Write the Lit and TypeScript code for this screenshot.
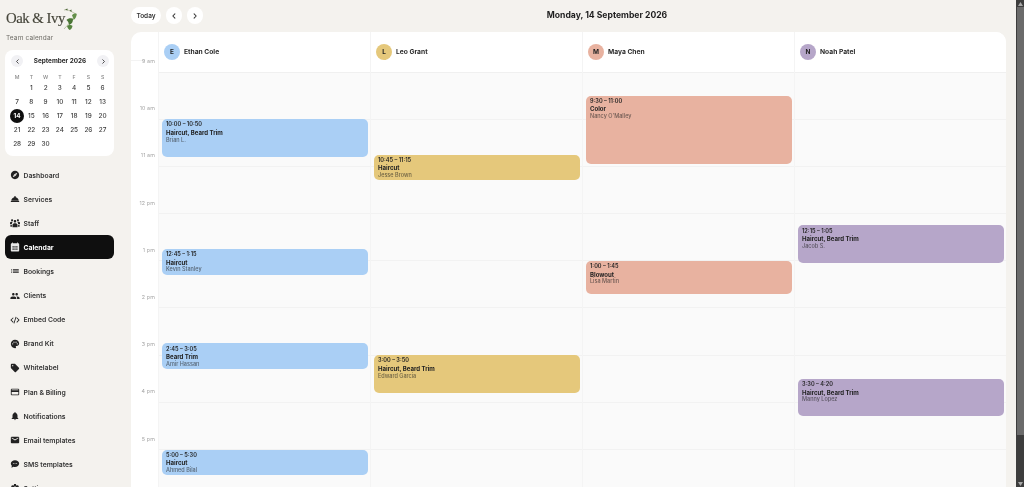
import { LitElement, html, css, svg } from "lit";
import { customElement } from "lit/decorators.js";

const HOUR = 47.2;
const icons: Record<string, string> = {
  dash: "M12 2C6.48 2 2 6.48 2 12s4.48 10 10 10 10-4.48 10-10S17.52 2 12 2zm-5.5 15.5l7.51-3.49L17.5 6.5 9.99 9.99 6.5 17.5zm5.5-6.6c.61 0 1.1.49 1.1 1.1s-.49 1.1-1.1 1.1-1.1-.49-1.1-1.1.49-1.1 1.1-1.1z",
  service: "M2 17h20v2H2zm11.84-9.21c.1-.24.16-.51.16-.79 0-1.1-.9-2-2-2s-2 .9-2 2c0 .28.06.55.16.79C6.25 8.6 3.27 11.93 3 16h18c-.27-4.07-3.25-7.4-7.16-8.21z",
  staff: "M12 12.75c1.63 0 3.07.39 4.24.9 1.08.48 1.76 1.56 1.76 2.73V22H6v-5.61c0-1.18.68-2.26 1.76-2.73 1.17-.52 2.61-.91 4.24-.91zM5 8c1.4 0 2.5-1.1 2.5-2.5S6.400 3 5 3 2.500 4.100 2.500 5.500 3.600 8 5 8zm1.500 1.400C6 9.200 5.500 9 5 9c-1.200 0-2.400.3-3.500.8C.6 10.200 0 11 0 12v3h4.500v-1c0-1.800.7-3.400 2-4.600zM19 8c1.400 0 2.500-1.100 2.500-2.500S20.400 3 19 3s-2.500 1.100-2.500 2.500S17.600 8 19 8zm5 4c0-1-.6-1.800-1.500-2.200C21.400 9.300 20.200 9 19 9c-.5 0-1 .2-1.500.4 1.300 1.200 2 2.800 2 4.600v1H24v-3zM12 5c1.660 0 3 1.340 3 3s-1.340 3-3 3-3-1.340-3-3 1.340-3 3-3zM1 17h3.500v4H1zM19.500 17H23v4h-3.500z",
  cal: "M20 3h-1V1h-2v2H7V1H5v2H4c-1.100 0-2 .9-2 2v16c0 1.100.9 2 2 2h16c1.100 0 2-.9 2-2V5c0-1.100-.9-2-2-2zM6 10h3v3H6zm4.500 0h3v3h-3zm4.500 0h3v3h-3zM6 15.500h3v3H6zm4.500 0h3v3h-3zm4.500 0h3v3h-3z",
  list: "M3 13h2v-2H3v2zm0 4h2v-2H3v2zm0-8h2V7H3v2zm4 4h14v-2H7v2zm0 4h14v-2H7v2zM7 7v2h14V7H7z",
  people: "M16 11c1.66 0 2.99-1.34 2.99-3S17.66 5 16 5c-1.66 0-3 1.34-3 3s1.34 3 3 3zm-8 0c1.66 0 2.99-1.34 2.99-3S9.66 5 8 5C6.34 5 5 6.34 5 8s1.34 3 3 3zm0 2c-2.33 0-7 1.17-7 3.5V19h14v-2.5c0-2.33-4.67-3.5-7-3.5zm8 0c-.29 0-.62.02-.97.05 1.16.84 1.97 1.97 1.97 3.45V19h6v-2.5c0-2.33-4.67-3.5-7-3.5z",
  code: "M8.6 16.9L3.7 12l4.9-4.9L7.2 5.7 .9 12l6.3 6.3zM15.400 16.900l4.900-4.900-4.900-4.900 1.400-1.400 6.300 6.300-6.300 6.300zM10.400 20.500l-1.900-.5 5.100-16 1.900.5z",
  palette: "M12 2C6.49 2 2 6.49 2 12s4.49 10 10 10c1.38 0 2.5-1.12 2.5-2.5 0-.61-.23-1.2-.64-1.67-.08-.1-.13-.21-.13-.33 0-.28.22-.5.5-.5H16c3.31 0 6-2.69 6-6 0-4.96-4.49-9-10-9zm5.500 11c-.83 0-1.500-.67-1.500-1.500s.67-1.500 1.500-1.500 1.500.67 1.500 1.500-.67 1.500-1.500 1.500zm-3-4c-.83 0-1.500-.67-1.500-1.500S13.670 6 14.500 6s1.500.67 1.500 1.500S15.330 9 14.500 9zM5 11.500c0-.83.67-1.500 1.500-1.500s1.500.67 1.500 1.500S7.330 13 6.500 13 5 12.330 5 11.500zm6-4c0 .83-.67 1.500-1.500 1.500S8 8.330 8 7.500 8.670 6 9.500 6s1.500.67 1.500 1.500z",
  tag: "M21.41 11.41l-8.83-8.83c-.37-.37-.88-.58-1.41-.58H4c-1.1 0-2 .9-2 2v7.17c0 .53.21 1.04.59 1.41l8.83 8.83c.78.78 2.05.78 2.83 0l7.17-7.17c.78-.78.78-2.04-.01-2.83zM6.5 8C5.67 8 5 7.33 5 6.5S5.67 5 6.5 5 8 5.67 8 6.5 7.33 8 6.5 8z",
  card: "M20 4H4c-1.11 0-1.99.89-1.99 2L2 18c0 1.11.89 2 2 2h16c1.11 0 2-.89 2-2V6c0-1.11-.89-2-2-2zm0 14H4v-6h16v6zm0-10H4V6h16v2z",
  bell: "M12 22c1.1 0 2-.9 2-2h-4c0 1.1.89 2 2 2zm6-6v-5c0-3.07-1.64-5.64-4.5-6.32V4c0-.83-.67-1.5-1.5-1.5s-1.5.67-1.5 1.5v.68C7.63 5.36 6 7.92 6 11v5l-2 2v1h16v-1l-2-2z",
  mail: "M20 4H4c-1.1 0-1.99.9-1.99 2L2 18c0 1.1.9 2 2 2h16c1.1 0 2-.9 2-2V6c0-1.1-.9-2-2-2zm0 4l-8 5-8-5V6l8 5 8-5v2z",
  sms: "M12 3C6.500 3 2 6.600 2 11c0 2 .9 3.800 2.400 5.200L3.500 21l5-2.300c1.100.3 2.300.5 3.500.5 5.500 0 10-3.600 10-8.200S17.500 3 12 3zM7 10h2v2H7zm4 0h2v2h-2zm4 0h2v2h-2z",
  gear: "M19.14 12.94c.04-.3.06-.61.06-.94 0-.32-.02-.64-.07-.94l2.03-1.58c.18-.14.23-.41.12-.61l-1.92-3.32c-.12-.22-.37-.29-.59-.22l-2.39.96c-.5-.38-1.03-.7-1.62-.94l-.36-2.54c-.04-.24-.24-.41-.48-.41h-3.84c-.24 0-.43.17-.47.41l-.36 2.54c-.59.24-1.13.57-1.62.94l-2.39-.96c-.22-.08-.47 0-.59.22L2.74 8.87c-.12.21-.08.47.12.61l2.03 1.58c-.05.3-.09.63-.09.94s.02.64.07.94l-2.03 1.58c-.18.14-.23.41-.12.61l1.92 3.32c.12.22.37.29.59.22l2.39-.96c.5.38 1.03.7 1.62.94l.36 2.54c.05.24.24.41.48.41h3.84c.24 0 .44-.17.47-.41l.36-2.54c.59-.24 1.13-.56 1.62-.94l2.39.96c.22.08.47 0 .59-.22l1.92-3.32c.12-.22.07-.47-.12-.61l-2.01-1.58zM12 15.6c-1.98 0-3.6-1.62-3.6-3.6s1.62-3.6 3.6-3.6 3.6 1.62 3.6 3.6-1.62 3.6-3.6 3.6z",
};
const nav: [string, string][] = [
  ["dash", "Dashboard"], ["service", "Services"], ["staff", "Staff"], ["cal", "Calendar"],
  ["list", "Bookings"], ["people", "Clients"], ["code", "Embed Code"], ["palette", "Brand Kit"],
  ["tag", "Whitelabel"], ["card", "Plan & Billing"], ["bell", "Notifications"], ["mail", "Email templates"],
  ["sms", "SMS templates"], ["gear", "Settings"],
];
const hours = ["9 am", "10 am", "11 am", "12 pm", "1 pm", "2 pm", "3 pm", "4 pm", "5 pm"];
type Ev = { s: number; e: number; t: string; n: string; c: string };
const staff = [
  { name: "Ethan Cole", color: "#aacff5", events: [
    { s: 10, e: 10 + 50 / 60, t: "10:00 – 10:50", n: "Haircut, Beard Trim", c: "Brian L." },
    { s: 12.75, e: 13.25, t: "12:45 – 1:15", n: "Haircut", c: "Kevin Stanley" },
    { s: 14.75, e: 15 + 5 / 60, t: "2:45 – 3:05", n: "Beard Trim", c: "Amir Hassan" },
    { s: 17, e: 17.5, t: "5:00 – 5:30", n: "Haircut", c: "Ahmed Bilal" },
  ] as Ev[] },
  { name: "Leo Grant", color: "#e5c87b", events: [
    { s: 10.75, e: 11.25, t: "10:45 – 11:15", n: "Haircut", c: "Jesse Brown" },
    { s: 15, e: 15 + 50 / 60, t: "3:00 – 3:50", n: "Haircut, Beard Trim", c: "Edward Garcia" },
  ] as Ev[] },
  { name: "Maya Chen", color: "#e8b2a0", events: [
    { s: 9.5, e: 11, t: "9:30 – 11:00", n: "Color", c: "Nancy O'Malley" },
    { s: 13, e: 13.75, t: "1:00 – 1:45", n: "Blowout", c: "Lisa Martin" },
  ] as Ev[] },
  { name: "Noah Patel", color: "#b6a6c9", events: [
    { s: 12.25, e: 13 + 5 / 60, t: "12:15 – 1:05", n: "Haircut, Beard Trim", c: "Jacob S." },
    { s: 15.5, e: 16 + 20 / 60, t: "3:30 – 4:20", n: "Haircut, Beard Trim", c: "Manny Lopez" },
  ] as Ev[] },
];
const days: (number | null)[] = [null, 1, 2, 3, 4, 5, 6, ...Array.from({ length: 24 }, (_, i) => i + 7)];

@customElement("app-root")
export class AppRoot extends LitElement {
  static styles = css`
    :host { display: flex; height: 487px; overflow: hidden; background: #f4f2ee; font-family: Inter, "Liberation Sans", sans-serif; color: #1c1c1c; }
    aside { width: 125px; flex: none; box-sizing: border-box; padding: 0 11px 0 5px; will-change: transform; }
    .brand { height: 50px; box-sizing: border-box; padding: 8px 0 0 1px; }
    .logo { display: flex; align-items: flex-start; height: 23px; }
    .logo span { font: 400 14.8px/20px "Liberation Serif", serif; color: #45453a; letter-spacing: -.5px; white-space: nowrap; width: 57px; flex: none; -webkit-text-stroke: .15px #45453a; }
    .logo svg { width: 14px; height: 22px; flex: none; }
    .sub { font-size: 6.5px; color: #6f6d67; line-height: 9px; margin-top: 3px; letter-spacing: .15px; }
    .mini { background: #fff; border-radius: 8px; height: 106px; box-sizing: border-box; padding: 5px 5px 0 5px; }
    .mhead { display: flex; align-items: center; justify-content: space-between; height: 12px; padding-left: 1px; font-size: 6.4px; font-weight: 700; color: #2a2a2a; }
    .mnav { width: 12px; height: 12px; border-radius: 50%; background: #f1f1f4; display: flex; align-items: center; justify-content: center; }
    .mnav svg { width: 5px; height: 5px; }
    .mgrid { display: grid; grid-template-columns: repeat(7, 14.25px); grid-template-rows: 9px; grid-auto-rows: 13.8px; margin-top: 5.5px; justify-items: center; align-items: center; font-size: 6.4px; font-weight: 500; color: #3c3c3c; }
    .mgrid .wd { font-size: 5.2px; color: #8a8a8a; }
    .today { width: 14px; height: 14px; border-radius: 50%; background: #0f0f0f; color: #fff; font-weight: 700; display: flex; align-items: center; justify-content: center; }
    nav { display: flex; flex-direction: column; margin-top: 7px; }
    .item { height: 24.12px; flex: none; display: flex; align-items: center; gap: 3.5px; padding-left: 5px; font-size: 6.8px; font-weight: 600; color: #333; border-radius: 6px; box-sizing: border-box; }
    .item svg { width: 10px; height: 10px; flex: none; fill: #222; }
    .item.on { background: #0f0f0f; color: #fff; font-weight: 700; }
    .item.on svg { fill: #e8e8e8; }
    main { flex: 1; min-width: 0; padding: 7px 10px 0 6px; display: flex; flex-direction: column; will-change: transform; }
    .top { height: 25px; flex: none; display: flex; align-items: flex-start; }
    .btn { background: #fff; height: 17px; border-radius: 9px; display: flex; align-items: center; justify-content: center; font-size: 6.5px; font-weight: 600; color: #333; }
    .btn.t { width: 30px; margin-right: 5px; }
    .btn.c { width: 16px; margin-right: 5px; }
    .btn svg { width: 6px; height: 6px; }
    .date { flex: 1; text-align: center; font-size: 8.6px; font-weight: 700; line-height: 17px; color: #1e1e1e; }
    .board { flex: 1; background: #fff; border-radius: 10px 10px 0 0; display: grid; grid-template-columns: 27px repeat(4, 1fr); overflow: hidden; }
    .gutter { padding-top: 24px; position: relative; }
    .gutter::before { content: ""; position: absolute; left: 0; top: 28px; width: 14px; border-top: 1px solid #f3f3f3; }
    .hr { height: 47.2px; box-sizing: border-box; text-align: right; padding-right: 3px; font-size: 5.3px; line-height: 10px; color: #a3a3a3; letter-spacing: .15px; position: relative; }
    .col { border-left: 1px solid #f4f4f4; min-width: 0; display: flex; flex-direction: column; }
    .chead { height: 41px; margin-bottom: -1px; position: relative; z-index: 1; flex: none; box-sizing: border-box; display: flex; align-items: center; gap: 4px; padding: 0 0 1px 5px; font-size: 6.7px; font-weight: 700; color: #2a2a2a; background: #fff; border-bottom: 1px solid #f0f0f0; }
    .av { width: 16px; height: 16px; border-radius: 50%; display: flex; align-items: center; justify-content: center; font-size: 6.4px; font-weight: 700; color: #222; }
    .cbody { position: relative; flex: 1; background: #fafafa; padding-top: .4px; }
    .cell { height: 47.2px; box-sizing: border-box; border-bottom: 1px solid #f2f2f2; }
    .ev { position: absolute; left: 3px; right: 2px; border-radius: 5px; padding: 2.2px 4px; box-sizing: border-box; font-size: 5.6px; line-height: 7.6px; color: #222; overflow: hidden; }
    .ev .tm { font-weight: 600; }
    .ev .nm { font-weight: 700; font-size: 6.05px; }
    .ev .cl { font-size: 5.5px; font-weight: 500; opacity: .62; }
    .bar { width: 8px; flex: none; background: #3d3d3d; display: flex; flex-direction: column; align-items: stretch; }
    .thumb { flex: none; height: 428px; margin: 0 0 0 1px; background: #6b6b6b; }
    .arrow { height: 7px; flex: none; display: flex; align-items: center; justify-content: center; }
    .arrow svg { width: 5px; height: 4px; fill: #a8a8a8; }
    .gap { flex: 1; }
  `;

  private chev(left: boolean) {
    return html`<svg viewBox="0 0 10 10" fill="none" stroke="#333" stroke-width="1.7" stroke-linecap="round" stroke-linejoin="round">${svg`<path d=${left ? "M6.500 1.500 3 5l3.500 3.500" : "M3.500 1.500 7 5 3.500 8.500"} />`}</svg>`;
  }

  private leaf() {
    return html`<svg viewBox="0 0 14 22">
      ${svg`
      <path d="M1 21 C5 17 9 12 12.500 6 M1 2 C5 1 9 4 13 6" fill="none" stroke="#7a8a5a" stroke-width=".45"/>
      <path d="M3.500 12 C5 10 9 10 10 11 C10 14 9 16 6 17 C6 15 5 13 3.500 12Z" fill="#4a7636"/>
      <path d="M4 18 C5.500 16.500 8.500 17 9.500 18 C9 20.500 8 21.500 6.500 22 C5.500 21 4.500 20 4 18Z" fill="#578540"/>
      <path d="M9 7.500 C10 5.500 12.500 5 13.800 6 C13.500 8.500 12.500 11 10.500 12 C10.500 10.500 10 9 9 7.500Z" fill="#64904a"/>
      <path d="M2 1.500 L4.500 .5 L4.500 2.500 Z M6.500 2.500 L8.500 1.500 L8.500 4 Z" fill="#4f6a3a"/>
      `}
    </svg>`;
  }

  render() {
    return html`
      <aside>
        <div class="brand">
          <div class="logo"><span>Oak &amp; Ivy</span>${this.leaf()}</div>
          <div class="sub">Team calendar</div>
        </div>
        <div class="mini">
          <div class="mhead">
            <div class="mnav">${this.chev(true)}</div>
            <div>September 2026</div>
            <div class="mnav">${this.chev(false)}</div>
          </div>
          <div class="mgrid">
            ${["M", "T", "W", "T", "F", "S", "S"].map((d) => html`<div class="wd">${d}</div>`)}
            ${days.map((d) => d === 14 ? html`<div class="today">14</div>` : html`<div>${d ?? ""}</div>`)}
          </div>
        </div>
        <nav>
          ${nav.map(([i, l]) => html`<div class="item ${l === "Calendar" ? "on" : ""}">
            <svg viewBox="0 0 24 24" fill-rule="evenodd">${svg`<path d=${icons[i]} />`}</svg><span>${l}</span>
          </div>`)}
        </nav>
      </aside>
      <main>
        <div class="top">
          <div class="btn t">Today</div>
          <div class="btn c">${this.chev(true)}</div>
          <div class="btn c">${this.chev(false)}</div>
          <div class="date">Monday, 14 September 2026</div>
        </div>
        <div class="board">
          <div class="gutter">${hours.map((h) => html`<div class="hr">${h}</div>`)}</div>
          ${staff.map((s) => html`<div class="col">
            <div class="chead"><div class="av" style="background:${s.color}">${s.name[0]}</div><span>${s.name}</span></div>
            <div class="cbody">
              ${hours.map(() => html`<div class="cell"></div>`)}
              ${s.events.map((e) => html`<div class="ev" style="top:${(e.s - 9) * HOUR}px;height:${Math.max((e.e - e.s) * HOUR - 2, 25.5)}px;background:${s.color}">
                <div class="tm">${e.t}</div><div class="nm">${e.n}</div><div class="cl">${e.c}</div>
              </div>`)}
            </div>
          </div>`)}
        </div>
      </main>
      <div class="bar">
        <div class="arrow"><svg viewBox="0 0 10 8">${svg`<path d="M5 0 10 8H0z"/>`}</svg></div>
        <div class="thumb"></div>
        <div class="gap"></div>
        <div class="arrow"><svg viewBox="0 0 10 8">${svg`<path d="M0 0h10L5 8z"/>`}</svg></div>
      </div>
    `;
  }
}
